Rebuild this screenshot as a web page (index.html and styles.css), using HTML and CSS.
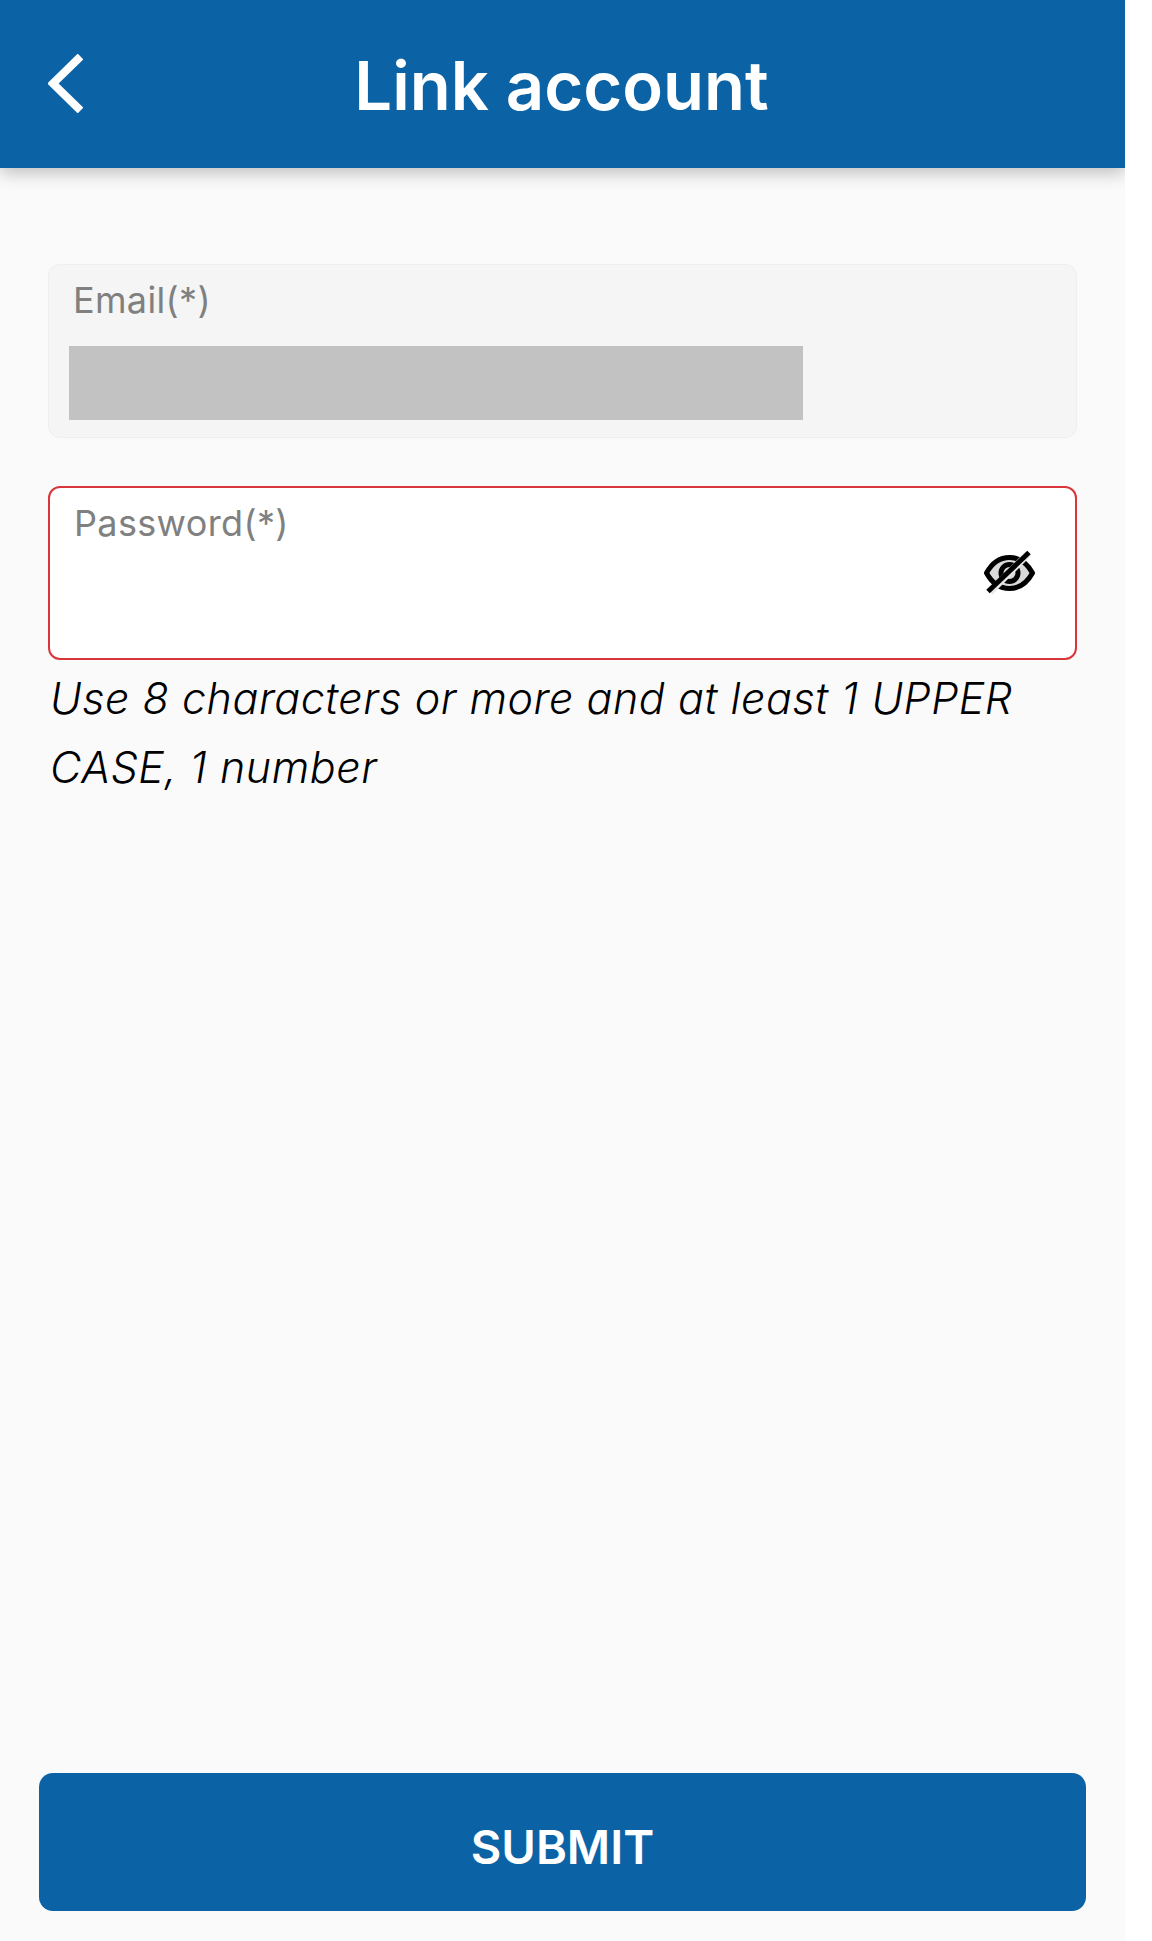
FILE: index.html
```html
<!DOCTYPE html>
<html lang="en">
<head>
<meta charset="utf-8">
<title>Link account</title>
<link rel="stylesheet" href="styles.css">
</head>
<body>
<div class="app">
  <header class="topbar">
    <svg class="back" viewBox="0 0 35 59" aria-hidden="true"><path d="M32.500 2.500 5 29.500 32.500 56.500"/></svg>
    <h1 class="title">Link account</h1>
  </header>
  <main class="form">
    <div class="field field-disabled">
      <div class="label">Email(*)</div>
      <div class="redacted"></div>
    </div>
    <div class="field field-error">
      <div class="label">Password(*)</div>
      <svg class="eye" viewBox="0 0 51 45" aria-hidden="true">
        <path class="eye-fill" d="M2.500 23C8 13 16 7.500 25.500 7.500S43 13 48.500 23C43 33 35 38.500 25.500 38.500S8 33 2.500 23Z"/>
        <circle class="eye-pupil" cx="25.500" cy="23" r="8.500"/>
        <path class="eye-gap" d="M6 42 44 4"/>
        <path class="eye-slash" d="M4 41.500 45 2.500"/>
      </svg>
    </div>
    <p class="hint">Use 8 characters or more and at least 1 UPPER CASE, 1 number</p>
  </main>
  <button class="submit" type="button">SUBMIT</button>
</div>
</body>
</html>
```
FILE: styles.css
```css
* { box-sizing: border-box; }
html, body { margin: 0; padding: 0; background: #fff; }
body { font-family: Inter, "Liberation Sans", sans-serif; }
.app {
  width: 1125px;
  height: 1941px;
  background: #fafafa;
  display: flex;
  flex-direction: column;
  overflow: hidden;
}
.topbar {
  height: 168px;
  flex: none;
  background: #0b63a5;
  box-shadow: 0 5px 16px rgba(0, 0, 0, 0.24);
  display: flex;
  align-items: center;
  justify-content: center;
  position: relative;
}
.back {
  position: absolute;
  left: 48px;
  top: 54px;
  width: 35px;
  height: 59px;
}
.back path { fill: none; stroke: #fff; stroke-width: 8; }
.title {
  margin: 2px 2px 0 0;
  color: #fff;
  font-size: 67px;
  font-weight: 600;
  line-height: 1;
}
.form {
  flex: 1;
  padding: 96px 48px 0;
  display: flex;
  flex-direction: column;
}
.field {
  height: 174px;
  border-radius: 12px;
  padding: 13px 24px;
  position: relative;
}
.field-disabled {
  background: #f5f5f5;
  border: 1px solid #eeeeee;
  margin-bottom: 48px;
}
.field-error {
  background: #fff;
  border: 2px solid #d9363c;
}
.label {
  font-size: 36px;
  line-height: 44px;
  color: #808080;
  letter-spacing: 0.35px;
}
.redacted {
  width: 734px;
  height: 74px;
  margin: 24px 0 0 -4px;
  background: #c2c2c2;
}
.eye {
  position: absolute;
  left: 934px;
  top: 62px;
  width: 51px;
  height: 45px;
}
.eye-fill { fill: #d9d9d9; stroke: #000; stroke-width: 5; stroke-linejoin: round; }
.eye-pupil { fill: none; stroke: #000; stroke-width: 5; }
.eye-gap { stroke: #e8e8e8; stroke-width: 7; fill: none; }
.eye-slash { stroke: #000; stroke-width: 5; fill: none; }
.hint {
  margin: 4px 0 0 2px;
  font-size: 43px;
  line-height: 69px;
  letter-spacing: 0.55px;
  font-style: italic;
  font-weight: 350;
  color: #000;
}
.submit {
  flex: none;
  width: 1047px;
  height: 138px;
  margin: 0 0 30px 39px;
  padding: 8px 0 0;
  border: 0;
  border-radius: 14px;
  background: #0b63a5;
  color: #fff;
  font-family: inherit;
  font-size: 47px;
  font-weight: 600;
}
```
